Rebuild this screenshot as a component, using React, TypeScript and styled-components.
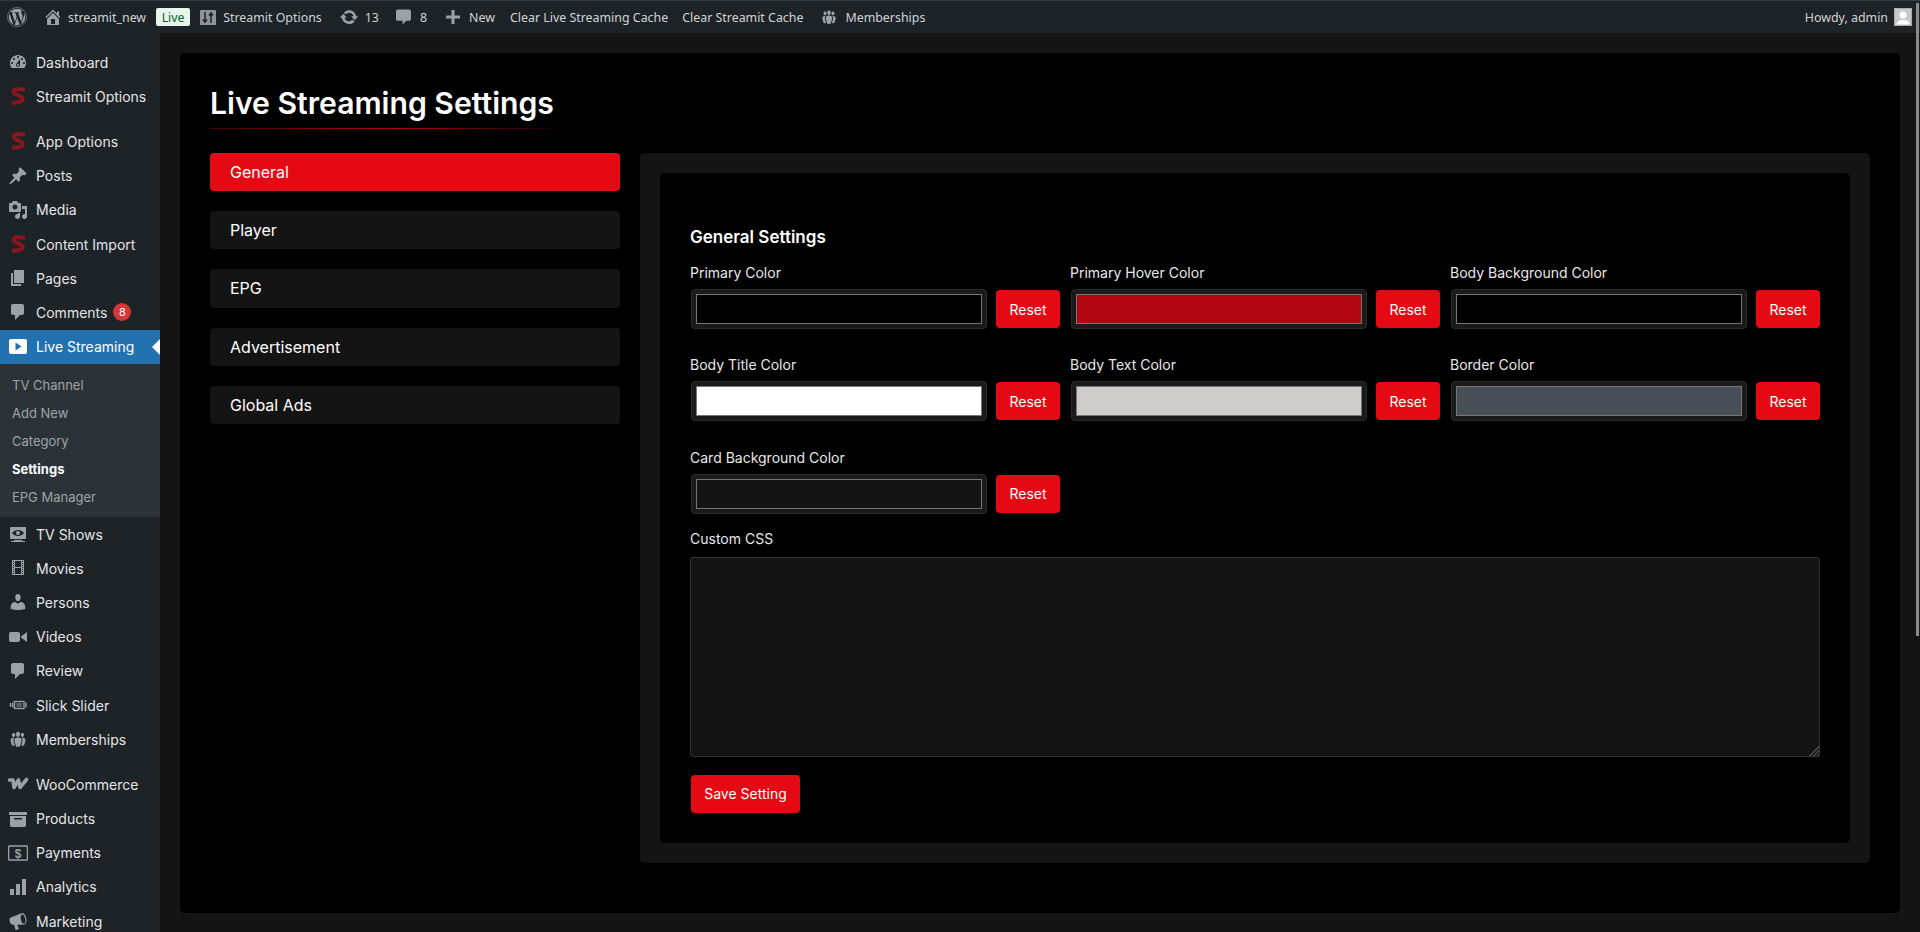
import React from 'react';
import styled, { createGlobalStyle } from 'styled-components';
import { FaWordpress } from 'react-icons/fa';

const GlobalStyle = createGlobalStyle`
  html, body {
    margin: 0;
    height: 932px;
    overflow: hidden;
    background: #141414;
  }
  * { box-sizing: border-box; }
  body { font-family: "Inter", "Liberation Sans", sans-serif; }
`;

const Dash = ({ d, size = 20 }: { d: string; size?: number }) => (
  <svg width={size} height={size} viewBox="0 0 20 20" fill="currentColor">
    <path d={d} />
  </svg>
);

const paths = {
  home: 'M16 8.5l1.53 1.53-1.06 1.06L10 4.62l-6.47 6.47-1.06-1.06L10 2.5l4 4v-2h2v4zm-6-2.46l6 5.99V18H4v-5.97zM12 17v-5H8v5h4z',
  dashboard: 'M3.76 16h12.48c1.1-1.37 1.76-3.11 1.76-5 0-4.42-3.58-8-8-8s-8 3.58-8 8c0 1.89.66 3.63 1.76 5zM10 4c.55 0 1 .45 1 1s-.45 1-1 1-1-.45-1-1 .45-1 1-1zM6 6c.55 0 1 .45 1 1s-.45 1-1 1-1-.45-1-1 .45-1 1-1zm8 0c.55 0 1 .45 1 1s-.45 1-1 1-1-.45-1-1 .45-1 1-1zm-5.37 5.55L12 7v6c0 1.1-.9 2-2 2s-2-.9-2-2c0-.57.24-1.08.63-1.45zM4 10c.55 0 1 .45 1 1s-.45 1-1 1-1-.45-1-1 .45-1 1-1zm12 0c.55 0 1 .45 1 1s-.45 1-1 1-1-.45-1-1 .45-1 1-1zm-5 3c0-.55-.45-1-1-1s-1 .45-1 1 .45 1 1 1 1-.45 1-1z',
  pin: 'M10.44 3.02l1.82-1.82 6.36 6.35-1.83 1.82c-1.05-.68-2.48-.57-3.41.36l-.75.75c-.92.93-1.04 2.35-.35 3.41l-1.83 1.82-2.41-2.41-2.8 2.79c-.42.42-3.38 2.71-3.8 2.29s1.86-3.39 2.28-3.81l2.79-2.79L4.1 9.36l1.83-1.82c1.05.69 2.48.57 3.4-.36l.75-.75c.93-.92 1.05-2.35.36-3.41z',
  media: 'M13 11V4c0-.55-.45-1-1-1h-1.67L9 1H5L3.67 3H2c-.55 0-1 .45-1 1v7c0 .55.45 1 1 1h10c.55 0 1-.45 1-1zM7 4.5c1.38 0 2.5 1.12 2.5 2.5S8.38 9.5 7 9.5 4.5 8.38 4.5 7 5.62 4.5 7 4.5zM14 6h5v10.5c0 1.38-1.12 2.5-2.5 2.5S14 17.88 14 16.5s1.12-2.5 2.5-2.5c.17 0 .34.02.5.05V9h-3V6zm-4 8.05V13h2v3.5c0 1.38-1.12 2.5-2.5 2.5S7 17.88 7 16.5 8.12 14 9.5 14c.17 0 .34.02.5.05z',
  page: 'M6 15V2h10v13H6zm-1 1h8v2H3V5h2v11z',
  comment: 'M5 2h9c1.1 0 2 .9 2 2v7c0 1.1-.9 2-2 2h-2l-5 5v-5H5c-1.1 0-2-.9-2-2V4c0-1.1.9-2 2-2z',
  update: 'M10.2 3.28c3.53 0 6.43 2.61 6.92 6h2.08l-3.5 4-3.5-4h2.32c-.45-1.97-2.21-3.45-4.32-3.45-1.45 0-2.73.71-3.54 1.78L4.95 5.66C6.23 4.2 8.11 3.28 10.2 3.28zm-.4 13.44c-3.52 0-6.43-2.61-6.92-6H.8l3.5-4c1.17 1.33 2.33 2.67 3.5 4H5.48c.45 1.97 2.21 3.45 4.32 3.45 1.45 0 2.73-.71 3.54-1.78l2.11 2.39c-1.28 1.46-3.15 2.39-5.25 2.39z',
  plus: 'M17 8.5v3h-5.5V17h-3v-5.5H3v-3h5.5V3h3v5.5H17z',
  users: 'M10 9.25c-2.27 0-2.73-3.44-2.73-3.44C7 4.02 7.82 2 9.97 2c2.16 0 2.98 2.02 2.71 3.81 0 0-.41 3.44-2.68 3.44zm0 2.57L12.72 10c2.39 0 4.52 2.33 4.52 4.53v2.49s-3.65 1.13-7.24 1.13c-3.65 0-7.24-1.13-7.24-1.13v-2.49c0-2.25 1.94-4.48 4.47-4.48z',
  video: 'M12 13V7c0-1.1-.9-2-2-2H3c-1.1 0-2 .9-2 2v6c0 1.1.9 2 2 2h7c1.1 0 2-.9 2-2zm1-2.5l6 4.5V5l-6 4.5v1z',
  film: 'M16 2H4v15h12V2zM5 3h1v1H5V3zm9 0h1v1h-1V3zM7 3h6v6H7V3zM5 5h1v1H5V5zm9 0h1v1h-1V5zM5 7h1v1H5V7zm9 0h1v1h-1V7zM5 9h1v1H5V9zm9 0h1v1h-1V9zm-7 1h6v6H7v-6zm-2 1h1v1H5v-1zm9 0h1v1h-1v-1zM5 13h1v1H5v-1zm9 0h1v1h-1v-1zM5 15h1v1H5v-1zm9 0h1v1h-1v-1z',
  tv: 'M18 14V4c0-.55-.45-1-1-1H3c-.55 0-1 .45-1 1v10c0 .55.45 1 1 1h14c.55 0 1-.45 1-1zm-8-8c2.3 0 4.4 1.14 6 3-1.6 1.86-3.7 3-6 3s-4.4-1.14-6-3c1.6-1.86 3.7-3 6-3zm2 3c0-1.1-.9-2-2-2s-2 .9-2 2 .9 2 2 2 2-.9 2-2zm2 8h3v1H3v-1h3v-1h8v1z',
  groups: 'M8.03 4.46c-.29 1.28.55 3.46 1.97 3.46 1.41 0 2.25-2.18 1.96-3.46-.22-.98-1.08-1.63-1.96-1.63-.89 0-1.74.65-1.97 1.63zm-4.13.9c-.25 1.08.47 2.93 1.67 2.93s1.92-1.85 1.67-2.93c-.19-.83-.92-1.39-1.67-1.39s-1.48.56-1.67 1.39zm8.86 0c-.25 1.08.47 2.93 1.66 2.93 1.2 0 1.92-1.85 1.67-2.93-.19-.83-.92-1.39-1.67-1.39-.74 0-1.47.56-1.66 1.39zm-.59 11.43l1.25-4.3C14.2 10 12.71 8.47 10 8.47c-2.72 0-4.21 1.53-3.44 4.02l1.26 4.3C8.05 17.51 9 18 10 18c.98 0 1.94-.49 2.17-1.21zm-6.1-7.63c-.49.67-.96 1.83-.42 3.59l1.12 3.79c-.34.2-.77.31-1.2.31-.85 0-1.65-.41-1.85-1.03l-1.07-3.65c-.65-2.11.61-3.4 2.92-3.4.27 0 .54.02.79.06-.1.1-.2.22-.29.33zm8.35-.39c2.31 0 3.58 1.29 2.92 3.4l-1.07 3.65c-.2.62-1 1.03-1.85 1.03-.43 0-.86-.11-1.2-.31l1.11-3.77c.55-1.78.08-2.94-.42-3.61-.08-.11-.18-.23-.28-.33.25-.04.51-.06.79-.06z',
  products: 'M19 3v3H1V3h18zM2 7h16v9c0 1.1-.4 2-1.5 2h-13C2.4 18 2 17.1 2 16V7zm4 2v1.5h8V9H6z',
  analytics: 'M18 18V2h-4v16h4zm-6 0V7H8v11h4zm-6 0v-6H2v6h4z',
  megaphone: 'M14.5 2c.5 0 1 .2 1.5.7 1.4 1.3 2.5 4 2.5 6.8 0 2.1-.7 3.7-2.2 4.1-.3.1-.6.1-.9.1H9.2l1.8 4.3-3.4 1-1.6-5.3H4.6c-1.2 0-2.4-1.3-2.9-3.1-.5-2 0-3.7 1.2-4.1L12.800 2.500c.5-.3 1.100-.5 1.700-.5zm-.1 1.500c-1.400 0-2.100 1.900-1.600 4.700.5 2.500 1.700 4.600 3 4.600 1.400 0 2.100-1.900 1.600-4.500-.5-2.700-1.700-4.800-3-4.800z',
};

const IconS = () => (
  <svg width="20" height="20" viewBox="0 0 20 20" fill="none" stroke="#8a1720" strokeWidth="4" strokeLinecap="butt" strokeLinejoin="round">
    <path d="M17 3.800 L8.500 3 Q4 4 6.500 7.500 L13.500 11 Q16.500 14 12.500 15.800 L4 17" />
  </svg>
);

const IconBubble = () => (
  <svg width="15" height="16" viewBox="0 0 16 16" fill="currentColor">
    <path d="M2 0h12c1.100 0 2 .9 2 2v8c0 1.100-.9 2-2 2h-3l-4 4v-4H2c-1.100 0-2-.9-2-2V2c0-1.100.9-2 2-2z" />
  </svg>
);

const IconSlick = () => (
  <svg width="20" height="20" viewBox="0 0 20 20" fill="none" stroke="currentColor">
    <rect x="6.500" y="6.500" width="9.500" height="7" strokeWidth="1.300" />
    <path d="M8.500 9h5.500M8.500 11h5.500" strokeWidth="1" />
    <path d="M2.500 8v4M4.700 7.500v5M18 7.500v5" strokeWidth="1.400" />
  </svg>
);

const IconWoo = () => (
  <svg width="22" height="20" viewBox="0 0 22 20" fill="none" stroke="currentColor" strokeWidth="3.600" strokeLinejoin="round" strokeLinecap="round">
    <path d="M2.500 6h3.500l1 7.500 4.500-7.500 1.500 7.500 6.500-8" />
  </svg>
);

const IconPayments = () => (
  <svg width="20" height="20" viewBox="0 0 20 20" fill="none" stroke="currentColor">
    <rect x="0.500" y="3" width="19" height="14" rx="1" strokeWidth="1.500" />
    <text x="10" y="14.500" fontSize="12" fontWeight="700" textAnchor="middle" fill="currentColor" stroke="none" fontFamily="Liberation Sans, sans-serif">$</text>
  </svg>
);

const IconLive = () => (
  <svg width="18" height="15" viewBox="0 0 18 15">
    <rect width="18" height="15" rx="2" fill="#fff" />
    <path d="M6.500 3.500l6 4-6 4z" fill="#2271b1" />
  </svg>
);

const IconOptions = () => (
  <svg width="16" height="15" viewBox="0 0 16 15">
    <rect width="16" height="15" rx="1" fill="#8f9396" />
    <path d="M5 2v10M3 9.500l2 2.500 2-2.500M11 13V3M9 5.500L11 3l2 2.500" fill="none" stroke="#1d2327" strokeWidth="1.500" />
  </svg>
);

const Avatar = () => (
  <svg width="18" height="18" viewBox="0 0 18 18">
    <rect width="18" height="18" fill="#c9c9c9" />
    <circle cx="9" cy="7" r="3.500" fill="#fff" />
    <path d="M2.500 16.500c.5-3.500 3-4.500 6.500-4.500s6 1 6.500 4.500z" fill="#fff" />
    <rect x="0.500" y="0.500" width="17" height="17" fill="none" stroke="#aaa" />
  </svg>
);

const AdminBar = styled.header`
  display: flex;
  align-items: center;
  height: 33px;
  padding-right: 8px;
  background: #1d2327;
  border-top: 1px solid #3a3b3d;
  color: #d0d3d6;
  font-family: "Noto Sans", "Open Sans", sans-serif;
  font-size: 12.4px;
`;

const BarItem = styled.span<{ $gap?: number; $left?: number }>`
  display: flex;
  align-items: center;
  gap: ${({ $gap }) => $gap ?? 8}px;
  margin-left: ${({ $left }) => $left ?? 0}px;
  white-space: nowrap;
  svg { color: #9ca1a6; display: block; }
`;

const LiveBadge = styled.span`
  display: flex;
  align-items: center;
  justify-content: center;
  width: 34px;
  height: 18px;
  margin-left: 10px;
  border-radius: 2px;
  background: #e6f6ea;
  color: #0c5f29;
`;

const BarSpacer = styled.span`
  flex: 1;
`;

const Layout = styled.div`
  display: flex;
  height: 899px;
`;

const Sidebar = styled.nav`
  width: 160px;
  flex: none;
  padding-top: 12px;
  background: #1d2327;
  overflow: hidden;
`;

const MenuItem = styled.div<{ $active?: boolean; $sep?: boolean }>`
  position: relative;
  display: flex;
  align-items: center;
  height: 34.2px;
  margin-top: ${({ $sep }) => ($sep ? 11 : 0)}px;
  background: ${({ $active }) => ($active ? '#2271b1' : 'transparent')};
  color: ${({ $active }) => ($active ? '#fff' : '#e3e5e7')};
  font-size: 14px;
  white-space: nowrap;
`;

const MenuIcon = styled.span`
  display: flex;
  align-items: center;
  justify-content: center;
  width: 36px;
  flex: none;
  color: #9ca1a6;
  svg { display: block; }
`;

const MenuBadge = styled.span`
  display: inline-flex;
  align-items: center;
  justify-content: center;
  width: 18px;
  height: 18px;
  margin-left: 6px;
  border-radius: 50%;
  background: #d63638;
  color: #fff;
  font-size: 11px;
`;

const ActiveArrow = styled.span`
  position: absolute;
  right: 0;
  top: 9px;
  border: 8px solid transparent;
  border-left-width: 0;
  border-right-color: #fff;
`;

const SubMenu = styled.div`
  padding: 7px 0 6.3px;
  background: #2c3338;
`;

const SubItem = styled.div<{ $current?: boolean }>`
  display: flex;
  align-items: center;
  height: 28px;
  padding-left: 12px;
  color: ${({ $current }) => ($current ? '#fff' : '#9fa4a8')};
  font-size: 13px;
  font-weight: ${({ $current }) => ($current ? 700 : 400)};
`;

const Main = styled.main`
  flex: 1;
  padding: 20px 20px 19px;
  background: #141414;
`;

const Card = styled.section`
  height: 100%;
  padding: 30px;
  border-radius: 5px;
  background: #000;
`;

const Title = styled.h1`
  display: inline-block;
  margin: 0 0 24px;
  padding: 4px 0 9px;
  color: #fff;
  font-size: 30.15px;
  font-weight: 600;
  line-height: 33px;
  background: linear-gradient(90deg, #4a0006, #b3000f 55%, #1c0002) no-repeat left bottom / 100% 1px;
  vertical-align: top;
`;

const Columns = styled.div`
  display: grid;
  grid-template-columns: 410px 1fr;
  gap: 20px;
`;

const Tabs = styled.div`
  display: flex;
  flex-direction: column;
  gap: 20px;
`;

const Tab = styled.div<{ $active?: boolean }>`
  display: flex;
  align-items: center;
  height: 38.2px;
  padding-left: 20px;
  border-radius: 4px;
  background: ${({ $active }) => ($active ? '#e50914' : '#141414')};
  color: #fff;
  font-size: 16px;
`;

const Panel = styled.div`
  padding: 20px;
  border-radius: 5px;
  background: #141414;
`;

const Inner = styled.form`
  padding: 54px 30px 30px;
  border-radius: 5px;
  background: #000;
`;

const Heading = styled.h2`
  margin: 0 0 16px;
  color: #fff;
  font-size: 17px;
  font-weight: 600;
  line-height: 20px;
`;

const FieldGrid = styled.div`
  display: grid;
  grid-template-columns: repeat(3, 370px);
  gap: 26.3px 10px;
`;

const Label = styled.label`
  display: block;
  margin-bottom: 6px;
  color: #e8e8e8;
  font-size: 14px;
  line-height: 20px;
`;

const ColorRow = styled.div`
  display: flex;
  align-items: center;
  gap: 9px;
  padding-left: 1px;
`;

const ColorBox = styled.span`
  display: flex;
  flex: 1;
  height: 40px;
  padding: 4px;
  border: 1px solid #2b2b2b;
  border-radius: 4px;
  background: #1a1a1a;
`;

const ColorInput = styled.input`
  appearance: none;
  display: block;
  width: 100%;
  height: 100%;
  margin: 0;
  padding: 0;
  border: 0;
  background: none;
  &::-webkit-color-swatch-wrapper { padding: 0; }
  &::-webkit-color-swatch { border: 1px solid #767676; border-radius: 0; }
`;

const Button = styled.button<{ $wide?: boolean }>`
  flex: none;
  width: ${({ $wide }) => ($wide ? 109 : 64)}px;
  height: 38px;
  margin-left: ${({ $wide }) => ($wide ? 1 : 0)}px;
  padding: 0;
  border: 0;
  border-radius: 4px;
  background: #e50914;
  color: #fff;
  font-family: inherit;
  font-size: 14px;
`;

const CssLabel = styled(Label)`
  margin: 15.4px 0 8px;
`;

const CssArea = styled.textarea`
  display: block;
  width: 100%;
  height: 200px;
  margin-bottom: 18px;
  border: 1px solid #333;
  border-radius: 3px;
  background: #141414;
  color: #fff;
  resize: vertical;
  &::-webkit-resizer {
    background:
      linear-gradient(135deg, #141414 62%, transparent 62%),
      repeating-linear-gradient(135deg, #4c4c4c 0 1.4px, #141414 1.4px 2.8px);
  }
`;

const ScrollThumb = styled.div`
  position: fixed;
  top: 3px;
  right: 1px;
  width: 3px;
  height: 633px;
  background: #8a8a8a;
`;

const menuTop: { label: string; icon: React.ReactNode; sep?: boolean; badge?: string }[] = [
  { label: 'Dashboard', icon: <Dash d={paths.dashboard} /> },
  { label: 'Streamit Options', icon: <IconS /> },
  { label: 'App Options', icon: <IconS />, sep: true },
  { label: 'Posts', icon: <Dash d={paths.pin} /> },
  { label: 'Media', icon: <Dash d={paths.media} /> },
  { label: 'Content Import', icon: <IconS /> },
  { label: 'Pages', icon: <Dash d={paths.page} /> },
  { label: 'Comments', icon: <Dash d={paths.comment} />, badge: '8' },
];

const menuBottom: { label: string; icon: React.ReactNode; sep?: boolean }[] = [
  { label: 'TV Shows', icon: <Dash d={paths.tv} /> },
  { label: 'Movies', icon: <Dash d={paths.film} /> },
  { label: 'Persons', icon: <Dash d={paths.users} /> },
  { label: 'Videos', icon: <Dash d={paths.video} /> },
  { label: 'Review', icon: <Dash d={paths.comment} /> },
  { label: 'Slick Slider', icon: <IconSlick /> },
  { label: 'Memberships', icon: <Dash d={paths.groups} /> },
  { label: 'WooCommerce', icon: <IconWoo />, sep: true },
  { label: 'Products', icon: <Dash d={paths.products} /> },
  { label: 'Payments', icon: <IconPayments /> },
  { label: 'Analytics', icon: <Dash d={paths.analytics} /> },
  { label: 'Marketing', icon: <Dash d={paths.megaphone} /> },
];

const subItems = ['TV Channel', 'Add New', 'Category', 'Settings', 'EPG Manager'];
const tabs = ['General', 'Player', 'EPG', 'Advertisement', 'Global Ads'];

const colorFields = [
  { label: 'Primary Color', value: '#000000' },
  { label: 'Primary Hover Color', value: '#b20710' },
  { label: 'Body Background Color', value: '#000000' },
  { label: 'Body Title Color', value: '#ffffff' },
  { label: 'Body Text Color', value: '#cfcdca' },
  { label: 'Border Color', value: '#484e55' },
  { label: 'Card Background Color', value: '#141414' },
];

export default function App() {
  return (
    <>
      <GlobalStyle />
      <AdminBar>
        <BarItem $left={7}><FaWordpress size={20} /></BarItem>
        <BarItem $left={16} $gap={5}><Dash d={paths.home} />streamit_new</BarItem>
        <LiveBadge>Live</LiveBadge>
        <BarItem $left={10} $gap={7}><IconOptions />Streamit Options</BarItem>
        <BarItem $left={17} $gap={6}><Dash d={paths.update} />13</BarItem>
        <BarItem $left={17} $gap={9}><IconBubble />8</BarItem>
        <BarItem $left={16} $gap={6}><Dash d={paths.plus} />New</BarItem>
        <BarItem $left={15}>Clear Live Streaming Cache</BarItem>
        <BarItem $left={14}>Clear Streamit Cache</BarItem>
        <BarItem $left={17} $gap={7}><Dash d={paths.groups} size={18} />Memberships</BarItem>
        <BarSpacer />
        <BarItem $gap={6}>Howdy, admin<Avatar /></BarItem>
      </AdminBar>
      <Layout>
        <Sidebar>
          {menuTop.map((m) => (
            <MenuItem key={m.label} $sep={m.sep}>
              <MenuIcon>{m.icon}</MenuIcon>
              {m.label}
              {m.badge && <MenuBadge>{m.badge}</MenuBadge>}
            </MenuItem>
          ))}
          <MenuItem $active>
            <MenuIcon><IconLive /></MenuIcon>
            Live Streaming
            <ActiveArrow />
          </MenuItem>
          <SubMenu>
            {subItems.map((s) => (
              <SubItem key={s} $current={s === 'Settings'}>{s}</SubItem>
            ))}
          </SubMenu>
          {menuBottom.map((m) => (
            <MenuItem key={m.label} $sep={m.sep}>
              <MenuIcon>{m.icon}</MenuIcon>
              {m.label}
            </MenuItem>
          ))}
        </Sidebar>
        <Main>
          <Card>
            <Title>Live Streaming Settings</Title>
            <Columns>
              <Tabs>
                {tabs.map((t) => (
                  <Tab key={t} $active={t === 'General'}>{t}</Tab>
                ))}
              </Tabs>
              <Panel>
                <Inner>
                  <Heading>General Settings</Heading>
                  <FieldGrid>
                    {colorFields.map((f) => (
                      <div key={f.label}>
                        <Label>{f.label}</Label>
                        <ColorRow>
                          <ColorBox><ColorInput type="color" defaultValue={f.value} /></ColorBox>
                          <Button type="button">Reset</Button>
                        </ColorRow>
                      </div>
                    ))}
                  </FieldGrid>
                  <CssLabel>Custom CSS</CssLabel>
                  <CssArea />
                  <Button type="button" $wide>Save Setting</Button>
                </Inner>
              </Panel>
            </Columns>
          </Card>
        </Main>
      </Layout>
      <ScrollThumb />
    </>
  );
}
